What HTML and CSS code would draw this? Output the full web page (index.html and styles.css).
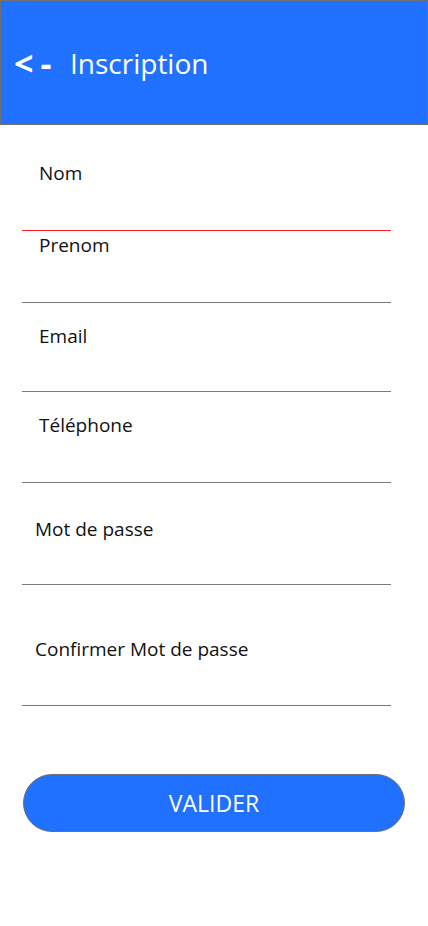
FILE: index.html
```html
<!DOCTYPE html>
<html lang="fr">
<head>
<meta charset="utf-8">
<title>Inscription</title>
<link rel="stylesheet" href="styles.css">
</head>
<body>
<header class="topbar">
  <span class="back">&lt;-</span>
  <h1 class="title">Inscription</h1>
</header>
<main class="form">
  <div class="field f-nom">
    <label class="label">Nom</label>
    <div class="input h45"></div>
    <div class="line line-error"></div>
  </div>
  <div class="field f-prenom">
    <label class="label">Prenom</label>
    <div class="input h45"></div>
    <div class="line"></div>
  </div>
  <div class="field f-email">
    <label class="label">Email</label>
    <div class="input h43"></div>
    <div class="line"></div>
  </div>
  <div class="field f-tel">
    <label class="label">Téléphone</label>
    <div class="input h45"></div>
    <div class="line"></div>
  </div>
  <div class="field f-mdp">
    <label class="label label-narrow">Mot de passe</label>
    <div class="input h43"></div>
    <div class="line"></div>
  </div>
  <div class="field f-conf">
    <label class="label label-narrow">Confirmer Mot de passe</label>
    <div class="input h44"></div>
    <div class="line"></div>
  </div>
  <button class="submit" type="button">VALIDER</button>
</main>
</body>
</html>
```
FILE: styles.css
```css
* { box-sizing: border-box; }
html, body {
  margin: 0;
  padding: 0;
  background: #ffffff;
  font-family: "Open Sans", "Noto Sans", sans-serif;
}
.topbar {
  height: 125px;
  background: #2071ff;
  border: 1px solid #707070;
  display: flex;
  align-items: center;
  padding-left: 13px;
  color: #ffffff;
}
.back {
  display: inline-block;
  width: 56px;
  font-size: 34px;
  font-weight: 700;
  letter-spacing: 7px;
  line-height: 1;
}
.title {
  margin: 0;
  font-size: 28px;
  font-weight: 400;
}
.form {
  padding-left: 22px;
  display: flex;
  flex-direction: column;
}
.field { width: 369px; }
.label {
  display: block;
  font-size: 19px;
  line-height: 24px;
  padding-top: 2px;
  color: #111;
  padding-left: 17px;
}
.label-narrow { padding-left: 13px; }
.input.h43 { height: 43px; }
.input.h44 { height: 44px; }
.input.h45 { height: 45px; }
.line {
  height: 1px;
  background: #7a7a7a;
}
.line-error { background: #ff2020; }
.f-nom { margin-top: 34px; }
.f-prenom { margin-top: 0; }
.f-email { margin-top: 19px; }
.f-tel { margin-top: 19px; }
.f-mdp { margin-top: 32px; }
.f-conf { margin-top: 50px; }
.submit {
  margin-top: 68px;
  margin-left: 1px;
  width: 382px;
  height: 58px;
  border-radius: 29px;
  border: 1px solid #707070;
  background: #2071ff;
  color: #ffffff;
  font-family: "Open Sans", "Noto Sans", sans-serif;
  font-size: 23px;
}
```
